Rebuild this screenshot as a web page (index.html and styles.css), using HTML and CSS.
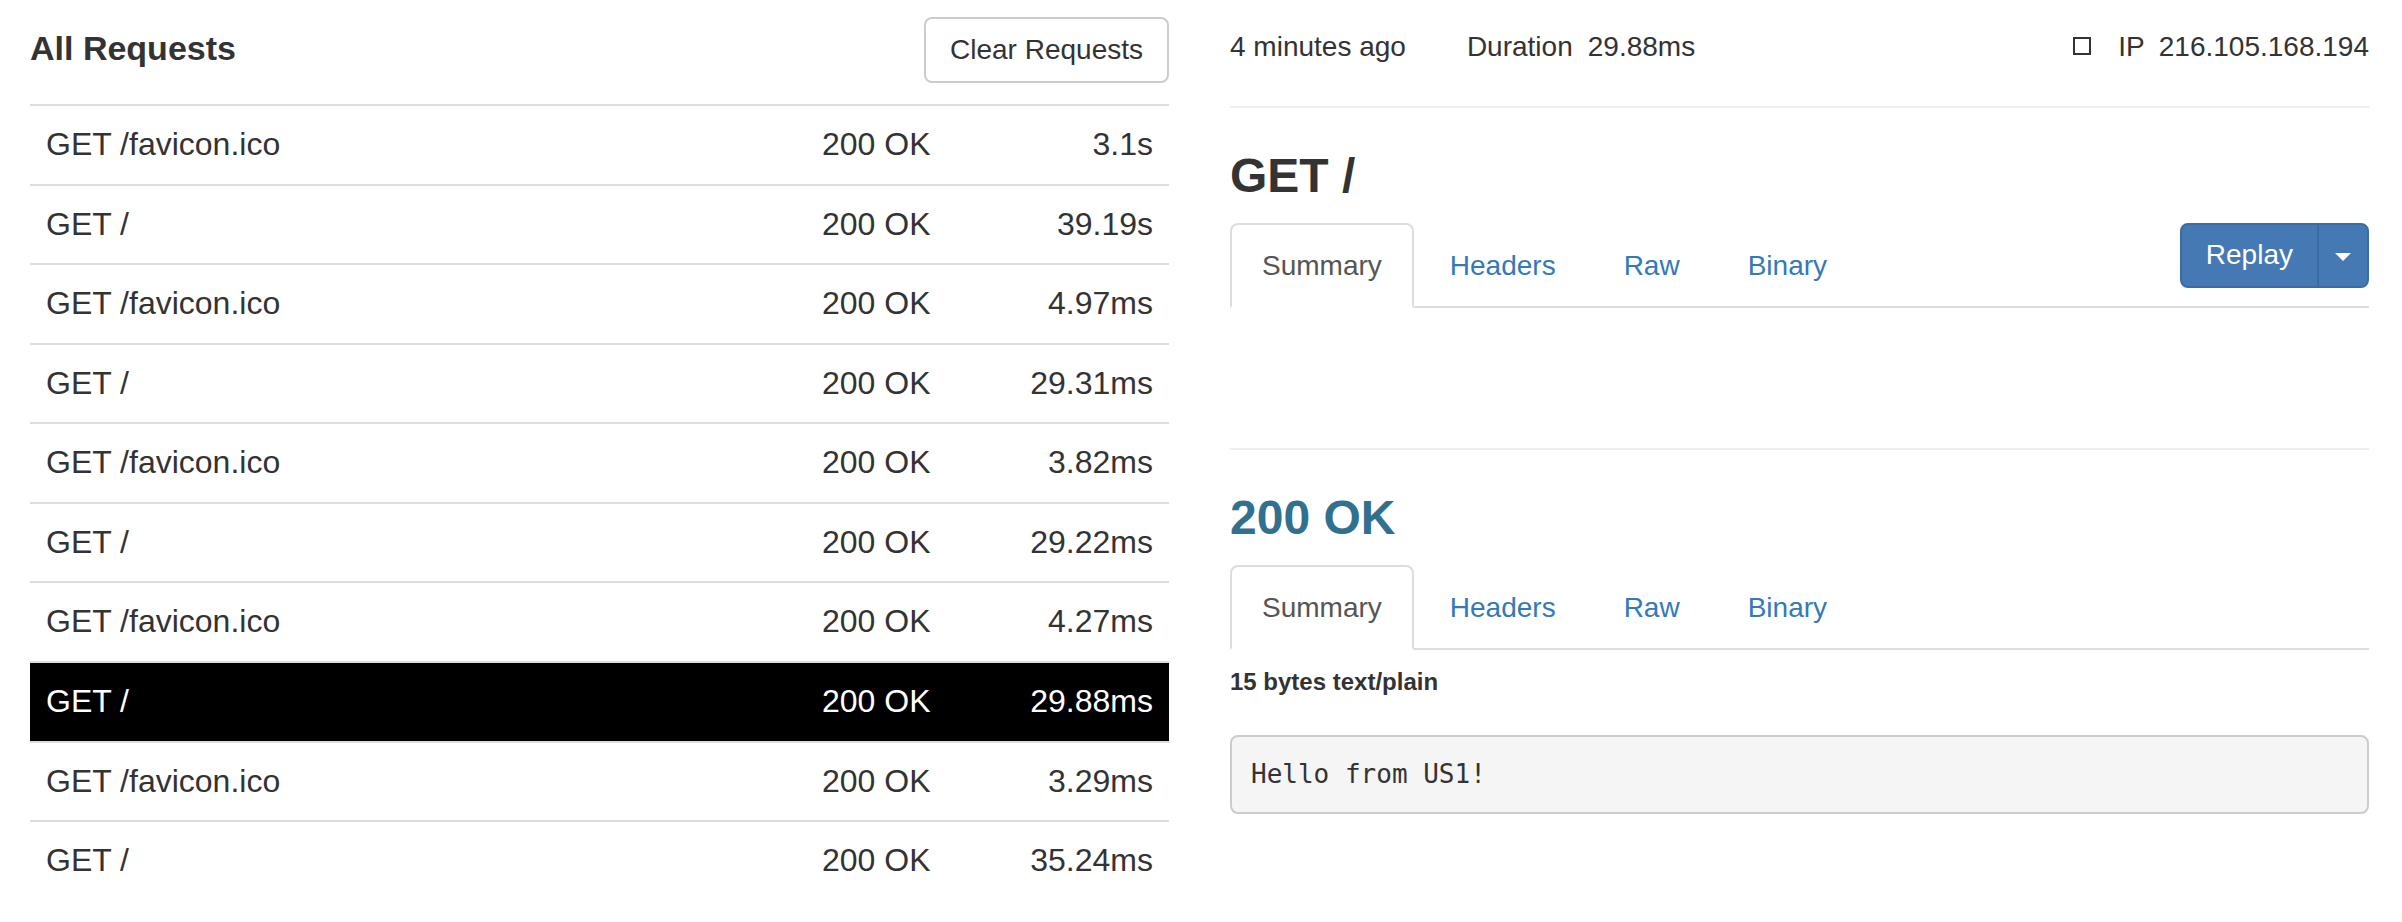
FILE: index.html
```html
<!DOCTYPE html>
<html>
<head>
<meta charset="utf-8">
<title>Inspect</title>
<link rel="stylesheet" href="styles.css">
</head>
<body>
<div class="page">
  <section class="requests">
    <div class="list-header">
      <h4 class="list-title">All Requests</h4>
      <button class="btn btn-default">Clear Requests</button>
    </div>
    <div class="req-list">
      <div class="req"><span class="path">GET /favicon.ico</span><span class="status">200 OK</span><span class="time">3.1s</span></div>
      <div class="req"><span class="path">GET /</span><span class="status">200 OK</span><span class="time">39.19s</span></div>
      <div class="req"><span class="path">GET /favicon.ico</span><span class="status">200 OK</span><span class="time">4.97ms</span></div>
      <div class="req"><span class="path">GET /</span><span class="status">200 OK</span><span class="time">29.31ms</span></div>
      <div class="req"><span class="path">GET /favicon.ico</span><span class="status">200 OK</span><span class="time">3.82ms</span></div>
      <div class="req"><span class="path">GET /</span><span class="status">200 OK</span><span class="time">29.22ms</span></div>
      <div class="req"><span class="path">GET /favicon.ico</span><span class="status">200 OK</span><span class="time">4.27ms</span></div>
      <div class="req selected"><span class="path">GET /</span><span class="status">200 OK</span><span class="time">29.88ms</span></div>
      <div class="req"><span class="path">GET /favicon.ico</span><span class="status">200 OK</span><span class="time">3.29ms</span></div>
      <div class="req"><span class="path">GET /</span><span class="status">200 OK</span><span class="time">35.24ms</span></div>
    </div>
  </section>

  <section class="detail">
    <div class="meta">
      <span class="ago">4 minutes ago</span>
      <span class="duration">Duration<span class="meta-val">29.88ms</span></span>
      <span class="ip"><span class="ip-icon"></span><span class="ip-label">IP</span><span class="meta-val">216.105.168.194</span></span>
    </div>

    <h3 class="heading">GET /</h3>
    <div class="tabbar">
      <a class="tab active">Summary</a>
      <a class="tab">Headers</a>
      <a class="tab">Raw</a>
      <a class="tab">Binary</a>
      <div class="btn-group">
        <button class="btn-primary btn-replay">Replay</button>
        <button class="btn-primary btn-caret"><span class="caret"></span></button>
      </div>
    </div>
    <div class="tab-content empty"></div>

    <hr class="divider">

    <h3 class="heading info">200 OK</h3>
    <div class="tabbar">
      <a class="tab active">Summary</a>
      <a class="tab">Headers</a>
      <a class="tab">Raw</a>
      <a class="tab">Binary</a>
    </div>
    <div class="tab-content">
      <h6 class="body-info">15 bytes text/plain</h6>
      <pre class="body-pre">Hello from US1!</pre>
    </div>
  </section>
</div>
</body>
</html>
```

FILE: styles.css
```css
* { box-sizing: border-box; }

html, body {
  margin: 0;
  padding: 0;
  background: #fff;
}

body {
  font-family: "Liberation Sans", Arial, Helvetica, sans-serif;
  font-size: 28px;
  color: #333;
}

.page {
  display: grid;
  grid-template-columns: 1fr 1fr;
  column-gap: 61px;
  padding: 0 33px 0 30px;
}

/* ---------- left: request list ---------- */
.list-header {
  display: flex;
  justify-content: space-between;
  align-items: flex-start;
  height: 104px;
}

.list-title {
  margin: 28px 0 0 0;
  font-size: 34px;
  line-height: 40px;
  font-weight: bold;
  color: #333;
}

.btn {
  font-family: inherit;
  font-size: 28px;
  line-height: 40px;
  color: #333;
  background: #fff;
  border: 2px solid #ccc;
  border-radius: 8px;
  padding: 11px 24px;
  margin-top: 17px;
  cursor: pointer;
}

.req {
  display: grid;
  grid-template-columns: 1fr 170px 193px;
  border-top: 2px solid #ddd;
  padding: 16px 0;
  font-size: 32px;
  line-height: 45.57px;
  color: #333;
}

.req > span {
  padding: 0 16px;
  white-space: nowrap;
}

.req .time { text-align: right; }

.req.selected {
  background: #000;
  color: #fff;
}

/* ---------- right: detail ---------- */
.meta {
  display: flex;
  align-items: baseline;
  padding: 27px 0 39px 0;
  line-height: 40px;
  border-bottom: 2px solid #eee;
}

.duration { margin-left: 61px; }

.meta-val { margin-left: 15px; }

.ip {
  margin-left: auto;
  display: flex;
  align-items: baseline;
}

.ip-icon {
  display: inline-block;
  width: 18px;
  height: 18px;
  border: 2px solid #333;
  align-self: center;
  margin-top: -2px;
}

.ip-label { margin-left: 27px; }

.ip .meta-val { margin-left: 14px; }

.heading {
  margin: 42px 0 20px 0;
  font-size: 48px;
  line-height: 52.8px;
  font-weight: bold;
  color: #333;
}

.heading.info { color: #31708f; }

.tabbar {
  display: flex;
  align-items: flex-start;
  border-bottom: 2px solid #ddd;
}

.tab {
  display: block;
  margin: 0 4px -2px 0;
  padding: 21px 30px 20px 30px;
  font-size: 28px;
  line-height: 40px;
  color: #337ab7;
  border: 2px solid transparent;
  border-radius: 8px 8px 0 0;
}

.tab.active {
  color: #555;
  background: #fff;
  border-color: #ddd #ddd transparent #ddd;
}

.btn-group {
  margin-left: auto;
  display: flex;
}

.btn-primary {
  font-family: inherit;
  font-size: 28px;
  line-height: 40px;
  color: #fff;
  background: #4579b4;
  border: 2px solid #3a6ba2;
  padding: 10.5px 24px;
  cursor: pointer;
}

.btn-replay {
  border-radius: 8px 0 0 8px;
}

.btn-caret {
  margin-left: -2px;
  width: 52px;
  padding: 10.5px 0;
  border-radius: 0 8px 8px 0;
  display: flex;
  align-items: center;
  justify-content: center;
}

.caret {
  display: block;
  width: 0;
  height: 0;
  margin-top: 3px;
  border-top: 8px solid #fff;
  border-left: 8px solid transparent;
  border-right: 8px solid transparent;
}

.tab-content.empty { height: 140px; }

.divider {
  margin: 0;
  border: 0;
  border-top: 2px solid #eee;
}

.body-info {
  margin: 15px 0 36px 0;
  font-size: 24px;
  line-height: 34px;
  font-weight: bold;
  color: #333;
}

.body-pre {
  margin: 0;
  padding: 19px;
  font-family: "DejaVu Sans Mono", "Liberation Mono", monospace;
  font-size: 26px;
  line-height: 37px;
  color: #333;
  background: #f5f5f5;
  border: 2px solid #ccc;
  border-radius: 8px;
}
```
